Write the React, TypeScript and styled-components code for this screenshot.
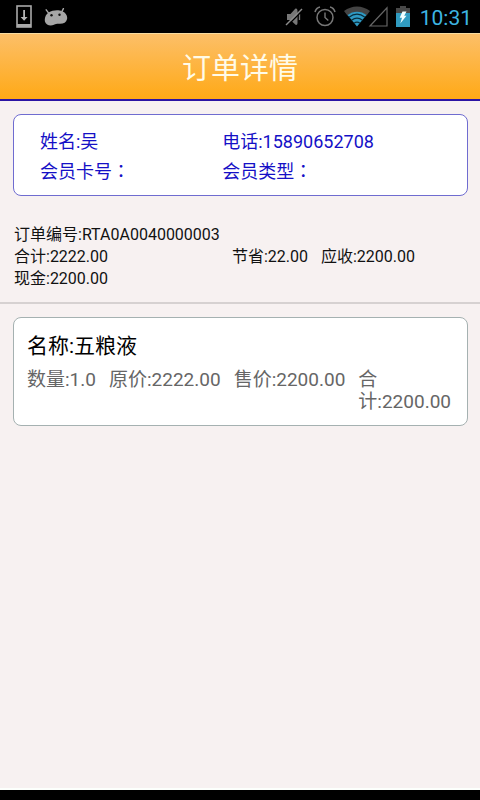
import React from "react";
import styled, { createGlobalStyle } from "styled-components";

const GlobalStyle = createGlobalStyle`
  * { box-sizing: border-box; }
  body {
    margin: 0;
    background: #f7f1f1;
    font-family: Roboto, "Noto Sans CJK SC", sans-serif;
  }
`;

const Screen = styled.div`
  min-height: 100vh;
  display: flex;
  flex-direction: column;
`;

const StatusBar = styled.div`
  height: 33px;
  background: #000;
  display: flex;
  align-items: center;
  justify-content: space-between;
  padding: 0 8px 0 16px;
`;

const IconGroup = styled.div<{ $gap: number }>`
  display: flex;
  align-items: center;
  gap: ${(p) => p.$gap}px;
  svg { display: block; }
`;

const Clock = styled.time`
  color: #3db5e3;
  font-size: 21px;
  line-height: 32px;
  padding: 2px 0 0 2px;
`;

const Header = styled.header`
  height: 68px;
  display: flex;
  align-items: center;
  justify-content: center;
  padding-top: 4px;
  background: linear-gradient(#fcbf68, #ffa916);
  border-top: 1px solid #f8dca0;
  border-bottom: 2px solid #2b14a4;
`;

const Title = styled.h1`
  margin: 0;
  color: #fffbe8;
  font-size: 29px;
  line-height: 36px;
  font-weight: 400;
`;

const Main = styled.main`
  flex: 1;
`;

const Card = styled.section<{ $line: string }>`
  margin: 0 12px 0 13px;
  background: #fff;
  border: 1px solid ${(p) => p.$line};
  border-radius: 8px;
`;

const MemberCard = styled(Card)`
  margin-top: 13px;
  padding: 12px 26px 8px;
  display: grid;
  grid-template-columns: 5fr 6fr;
  color: #1510c6;
  font-size: 18px;
  line-height: 30px;
`;

const WideColon = styled.span`
  font-family: "Noto Sans CJK TC", sans-serif;
  line-height: 18px;
`;

const Summary = styled.section`
  padding: 28px 12px 12px 14px;
  color: #111;
  font-size: 16px;
  line-height: 22px;
  border-bottom: 2px solid #d6d1d1;
`;

const TotalsRow = styled.div`
  display: grid;
  grid-template-columns: 12fr 13fr;
`;

const Fields = styled.div`
  display: flex;
  gap: 13px;
`;

const Field = styled.span`
  white-space: nowrap;
`;

const ProductCard = styled(Card)`
  margin-top: 13px;
  padding: 12px 13px;
`;

const ProductName = styled.h2`
  margin: 0 0 7px;
  color: #000;
  font-size: 21px;
  line-height: 32px;
  font-weight: 400;
`;

const ProductFields = styled(Fields)`
  color: #666;
  font-size: 19px;
  line-height: 22px;
`;

const WrapField = styled.span`
  flex: 1;
  min-width: 0;
`;

const BottomBar = styled.footer`
  height: 12px;
  background: #000;
  border-top: 2px solid #fcfffc;
`;

const DownloadIcon = () => (
  <svg width="16" height="23" viewBox="0 0 16 23">
    <rect x="1" y="1" width="14" height="21" fill="none" stroke="#a9a9a9" strokeWidth="1.6" />
    <path d="M1 19h14v3H1z" fill="#a9a9a9" />
    <path d="M7.2 5h1.8v7h2.6L8.1 15.8 4.6 12h2.6z" fill="#b5b5b5" />
  </svg>
);

const DroidIcon = () => (
  <svg width="24" height="18" viewBox="0 0 24 18">
    <path d="M2.2 1.8l3 4M19.4.6l-2 4" stroke="#a9a9a9" strokeWidth="1.4" strokeLinecap="round" />
    <path d="M5 4.2C8 2 15 1.500 18 3.200c4 1.300 5.800 5 5 8-.8 3.400-4 5-8.500 4.500-2 0-3 .2-4.500 1-3.500 1.500-8 .5-9-3C.2 10.400 1.500 6.200 5 4.200z" fill="#a6a6a6" />
    <circle cx="7.500" cy="7.300" r="1.200" fill="#111" />
    <circle cx="15.500" cy="6.700" r="1.200" fill="#111" />
  </svg>
);

const MuteIcon = () => (
  <svg width="21" height="20" viewBox="0 0 21 20">
    <path d="M2 7h3.500L10 2c1.500-1 2.500 0 2.500 2v12c0 2-1.500 2.500-2.500 1.300L5.500 13H2z" fill="#777" />
    <path d="M14.500 7v6" stroke="#777" strokeWidth="1.300" />
    <path d="M2 19L18 3" stroke="#000" strokeWidth="1.500" />
    <path d="M1 18L17 2" stroke="#8c8c8c" strokeWidth="1.500" />
  </svg>
);

const AlarmIcon = () => (
  <svg width="22" height="21" viewBox="0 0 22 21" fill="none" stroke="#777">
    <circle cx="11" cy="11.500" r="8" strokeWidth="1.500" />
    <path d="M11 6.500v5l3.300 3" strokeWidth="1.400" />
    <path d="M1 6C1.700 3.500 3.500 1.500 6 1M21 6c-.7-2.500-2.500-4.500-5-5" strokeWidth="1.600" />
  </svg>
);

const SignalIcon = () => (
  <svg width="44" height="21" viewBox="0 0 44 21">
    <path d="M0 5C8-1 18-1 26 5l-3.400 4.500C17 5 9 5 3.400 9.500z" fill="#444" />
    <path d="M3.500 9C9 4.500 17 4.500 22.500 9L13 20.500z" fill="#2f9ac4" />
    <path d="M5 11.200c5-3.800 11-3.800 16 0M7.500 14.200c3.500-2.600 7.500-2.600 11 0M10 17.200c2-1.400 4-1.400 6 0" fill="none" stroke="#082c3b" strokeWidth="1.100" />
    <path d="M26 20L43 1.800V20z" fill="#000" stroke="#666" strokeWidth="1.200" />
  </svg>
);

const BatteryIcon = () => (
  <svg width="14" height="22" viewBox="0 0 14 22">
    <path d="M4 0h6v2h4v6H0V2h4z" fill="#484848" />
    <path d="M0 7h14v14H0z" fill="#309bc0" />
    <path d="M6.500 5.500h4L8.200 9.800h2.300L4.300 17.500l1.700-5.800H3.700z" fill="#f2ffff" />
  </svg>
);

export default function App() {
  return (
    <Screen>
      <GlobalStyle />
      <StatusBar>
        <IconGroup $gap={12}>
          <DownloadIcon />
          <DroidIcon />
        </IconGroup>
        <IconGroup $gap={8}>
          <MuteIcon />
          <AlarmIcon />
          <SignalIcon />
          <BatteryIcon />
          <Clock>10:31</Clock>
        </IconGroup>
      </StatusBar>
      <Header>
        <Title>订单详情</Title>
      </Header>
      <Main>
        <MemberCard $line="#6f6cd0">
          <Field>姓名:吴</Field>
          <Field>电话:15890652708</Field>
          <Field>会员卡号<WideColon lang="zh-TW">：</WideColon></Field>
          <Field>会员类型<WideColon lang="zh-TW">：</WideColon></Field>
        </MemberCard>
        <Summary>
          <div>订单编号:RTA0A0040000003</div>
          <TotalsRow>
            <Field>合计:2222.00</Field>
            <Fields>
              <Field>节省:22.00</Field>
              <Field>应收:2200.00</Field>
            </Fields>
          </TotalsRow>
          <div>现金:2200.00</div>
        </Summary>
        <ProductCard $line="#a5b1b1">
          <ProductName>名称:五粮液</ProductName>
          <ProductFields>
            <Field>数量:1.0</Field>
            <Field>原价:2222.00</Field>
            <Field>售价:2200.00</Field>
            <WrapField>合计:2200.00</WrapField>
          </ProductFields>
        </ProductCard>
      </Main>
      <BottomBar />
    </Screen>
  );
}
